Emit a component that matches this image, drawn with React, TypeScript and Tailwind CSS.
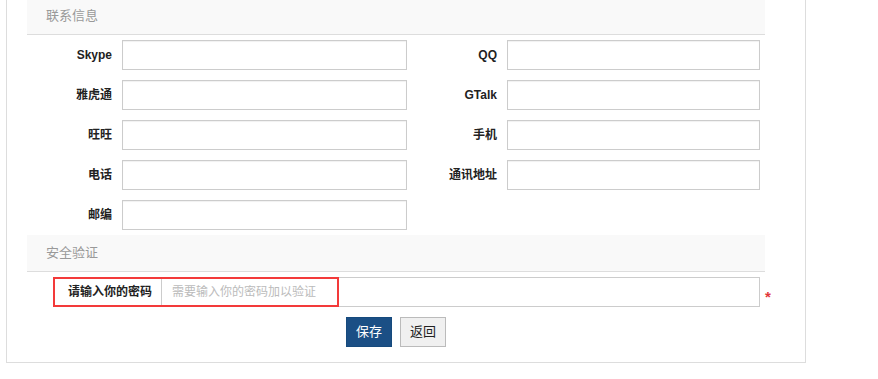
import React from "react";

const font = { fontFamily: '"Liberation Sans", "Noto Sans CJK SC", sans-serif' };

function Field({ label, labelW, inputW }: { label: string; labelW: string; inputW: string }) {
  return (
    <div className="flex items-center">
      <div className={`${labelW} pr-[10px] text-right text-[12px] font-bold text-[#222]`}>{label}</div>
      <div className={`${inputW} h-[30px] border border-[#ccc] bg-white shadow-[inset_0_1px_1px_rgba(0,0,0,0.06)]`} />
    </div>
  );
}

export default function App() {
  const rows: [string, string | null][] = [
    ["Skype", "QQ"],
    ["雅虎通", "GTalk"],
    ["旺旺", "手机"],
    ["电话", "通讯地址"],
    ["邮编", null],
  ];
  return (
    <div className="h-[379px] w-[878px] bg-white" style={font}>
      <div className="ml-[6px] w-[800px] border-x border-b border-[#ddd] pl-[20px] pb-[15px]">
        <div className="w-[738px]">
          <div className="-mt-[2px] flex h-[37px] items-center border-b border-[#ddd] bg-[#f9f9f9] pl-[19px] text-[13px] text-[#999]">
            联系信息
          </div>
          <div className="mt-[5px] flex flex-col gap-[10px]">
            {rows.map(([l, r]) => (
              <div key={l} className="flex h-[30px]">
                <Field label={l} labelW="w-[95px]" inputW="w-[285px]" />
                {r && <Field label={r} labelW="w-[100px]" inputW="w-[253px]" />}
              </div>
            ))}
          </div>
          <div className="mt-[5px] flex h-[37px] items-center border-b border-[#ddd] bg-[#f9f9f9] pl-[19px] text-[13px] text-[#999]">
            安全验证
          </div>
          <div className="mt-[5px] ml-[26px] flex w-[760px] items-center">
            <div className="relative flex h-[30px] w-[707px] shrink-0 border border-[#ccc] bg-white">
              <div className="flex w-[108px] shrink-0 items-center border-r border-[#ccc] pl-[14px] text-[12px] font-bold text-[#222]">
                请输入你的密码
              </div>
              <div className="flex items-center pl-[10px] text-[12px] text-[#bbb]">需要输入你的密码加以验证</div>
              <div className="pointer-events-none absolute -left-px -top-px h-[30px] w-[286px] border-2 border-[#f33a3a]" />
            </div>
            <span className="ml-[5px] mt-[8px] shrink-0 text-[15px] font-bold leading-none text-[#e2383a]">*</span>
          </div>
          <div className="mt-[10px] flex justify-center gap-[8px]">
            <button className="h-[30px] w-[46px] border border-[#164a7d] bg-[#1b4f85] text-[13px] text-white">保存</button>
            <button className="h-[30px] w-[46px] border border-[#bbb] bg-[#f0f0f0] text-[13px] text-[#222]">返回</button>
          </div>
        </div>
      </div>
    </div>
  );
}
